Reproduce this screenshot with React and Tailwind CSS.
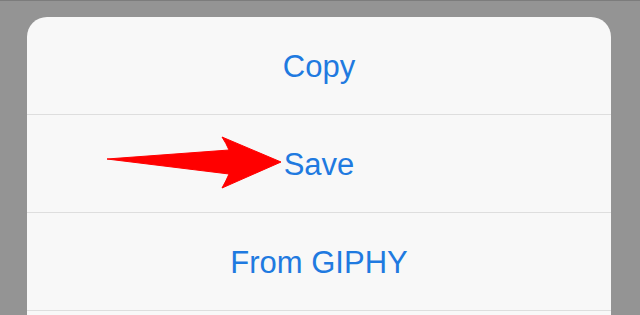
import React from "react";

export default function App() {
  const rows = ["Copy", "Save", "From GIPHY"];
  return (
    <div
      className="relative w-[640px] h-[315px] overflow-hidden bg-[#949494] border-t border-[#7c7c7c] pt-[16px] pl-[27px] pr-[29px] flex flex-col"
      style={{ fontFamily: '"Liberation Sans", Arial, sans-serif' }}
    >
      <div className="flex-1 bg-[#f8f8f8] rounded-t-[20px] overflow-hidden flex flex-col">
        {rows.map((r) => (
          <div
            key={r}
            className="h-[98px] shrink-0 flex items-center justify-center border-b border-[#dedede] text-[31px] text-[#1f7ae0] leading-none"
          >
            <span className="translate-y-[1px]">{r}</span>
          </div>
        ))}
      </div>
      <svg
        className="absolute left-0 top-0 pointer-events-none"
        width="640"
        height="315"
        viewBox="0 0 640 315"
      >
        <path
          d="M107 158 L229 149 Q226 142 222 136 L281 161 L222 187 Q226 180 229 173 Z"
          fill="#ff0000"
          stroke="#ff0000"
          strokeWidth="1"
          strokeLinejoin="round"
        />
      </svg>
    </div>
  );
}
